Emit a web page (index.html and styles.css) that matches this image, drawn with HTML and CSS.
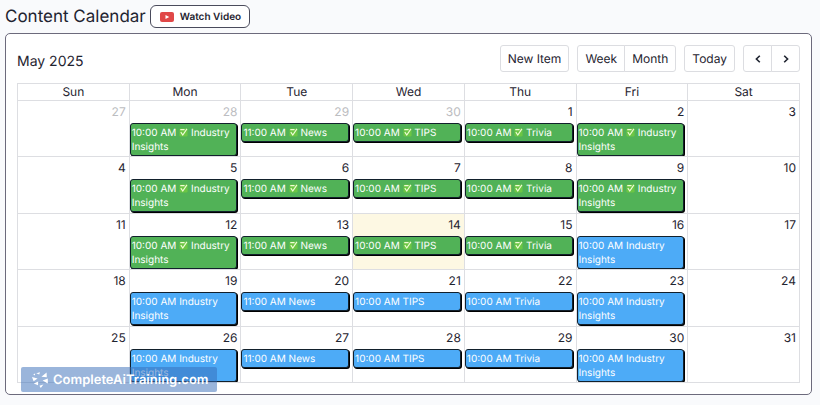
FILE: index.html
```
<!DOCTYPE html>
<html lang="en">
  <head>
    <meta charset="utf-8" />
    <meta name="viewport" content="width=device-width, initial-scale=1" />
    <title>Content Calendar</title>
    <link rel="stylesheet" href="styles.css">
  </head>
  <body>
    <svg width="0" height="0" class="sprite" aria-hidden="true">
      <symbol id="check" viewBox="0 0 10 10">
        <rect x="0.5" y="0.5" width="9" height="9" rx="1.5" fill="#6cc644" />
        <path d="M1.4 1.8H6.2M2 4.6 4.2 7.8 8.8 1" fill="none" stroke="#effcd6" stroke-width="1.3" />
      </symbol>
    </svg>

    <header class="page-header">
      <h1>Content Calendar</h1>
      <button type="button" class="watch-btn">
        <svg width="14" height="10" viewBox="0 0 14 10" aria-hidden="true">
          <rect width="14" height="10" rx="2" fill="#e04848" />
          <path d="M5.5 3v4L9.2 5z" fill="#fff" />
        </svg>
        Watch Video
      </button>
    </header>

    <main class="calendar">
      <div class="toolbar">
        <h2>May 2025</h2>
        <div class="toolbar-actions">
          <button type="button" class="btn">New Item</button>
          <div class="btn-group">
            <button type="button" class="btn">Week</button>
            <button type="button" class="btn">Month</button>
          </div>
          <button type="button" class="btn">Today</button>
          <div class="btn-group">
            <button type="button" class="btn btn-icon" aria-label="Previous month">
              <svg width="6" height="8" viewBox="0 0 6 8"><path d="M4.8 0.7 1.4 4l3.4 3.3" /></svg>
            </button>
            <button type="button" class="btn btn-icon" aria-label="Next month">
              <svg width="6" height="8" viewBox="0 0 6 8"><path d="M1.2 0.7 4.6 4 1.2 7.3" /></svg>
            </button>
          </div>
        </div>
      </div>

      <table class="month">
        <thead>
          <tr><th>Sun</th><th>Mon</th><th>Tue</th><th>Wed</th><th>Thu</th><th>Fri</th><th>Sat</th></tr>
        </thead>
        <tbody>
          <tr>
            <td class="other"><span class="day">27</span></td>
            <td class="other"><span class="day">28</span><div class="event done">10:00 AM <svg class="check"><use href="#check" /></svg> Industry Insights</div></td>
            <td class="other"><span class="day">29</span><div class="event done">11:00 AM <svg class="check"><use href="#check" /></svg> News</div></td>
            <td class="other"><span class="day">30</span><div class="event done">10:00 AM <svg class="check"><use href="#check" /></svg> TIPS</div></td>
            <td><span class="day">1</span><div class="event done">10:00 AM <svg class="check"><use href="#check" /></svg> Trivia</div></td>
            <td><span class="day">2</span><div class="event done">10:00 AM <svg class="check"><use href="#check" /></svg> Industry Insights</div></td>
            <td><span class="day">3</span></td>
          </tr>
          <tr>
            <td><span class="day">4</span></td>
            <td><span class="day">5</span><div class="event done">10:00 AM <svg class="check"><use href="#check" /></svg> Industry Insights</div></td>
            <td><span class="day">6</span><div class="event done">11:00 AM <svg class="check"><use href="#check" /></svg> News</div></td>
            <td><span class="day">7</span><div class="event done">10:00 AM <svg class="check"><use href="#check" /></svg> TIPS</div></td>
            <td><span class="day">8</span><div class="event done">10:00 AM <svg class="check"><use href="#check" /></svg> Trivia</div></td>
            <td><span class="day">9</span><div class="event done">10:00 AM <svg class="check"><use href="#check" /></svg> Industry Insights</div></td>
            <td><span class="day">10</span></td>
          </tr>
          <tr>
            <td><span class="day">11</span></td>
            <td><span class="day">12</span><div class="event done">10:00 AM <svg class="check"><use href="#check" /></svg> Industry Insights</div></td>
            <td><span class="day">13</span><div class="event done">11:00 AM <svg class="check"><use href="#check" /></svg> News</div></td>
            <td class="today"><span class="day">14</span><div class="event done">10:00 AM <svg class="check"><use href="#check" /></svg> TIPS</div></td>
            <td><span class="day">15</span><div class="event done">10:00 AM <svg class="check"><use href="#check" /></svg> Trivia</div></td>
            <td><span class="day">16</span><div class="event">10:00 AM Industry Insights</div></td>
            <td><span class="day">17</span></td>
          </tr>
          <tr>
            <td><span class="day">18</span></td>
            <td><span class="day">19</span><div class="event">10:00 AM Industry Insights</div></td>
            <td><span class="day">20</span><div class="event">11:00 AM News</div></td>
            <td><span class="day">21</span><div class="event">10:00 AM TIPS</div></td>
            <td><span class="day">22</span><div class="event">10:00 AM Trivia</div></td>
            <td><span class="day">23</span><div class="event">10:00 AM Industry Insights</div></td>
            <td><span class="day">24</span></td>
          </tr>
          <tr>
            <td><span class="day">25</span></td>
            <td><span class="day">26</span><div class="event">10:00 AM Industry Insights</div></td>
            <td><span class="day">27</span><div class="event">11:00 AM News</div></td>
            <td><span class="day">28</span><div class="event">10:00 AM TIPS</div></td>
            <td><span class="day">29</span><div class="event">10:00 AM Trivia</div></td>
            <td><span class="day">30</span><div class="event">10:00 AM Industry Insights</div></td>
            <td><span class="day">31</span></td>
          </tr>
        </tbody>
      </table>

      <div class="watermark">
        <svg width="16" height="16" viewBox="0 0 16 16" fill="#fff" aria-hidden="true">
          <path d="M0 5 5.6 6.4 1.6 9.2zM4.2 1.2 8 0.2 7.2 2.6zM9.4 4.8 14.6 0.6 14.8 5.2zM15.8 6.6v5L10.6 8.4zM1.8 11.6 6.2 9.4 6 13.2zM7.4 13.8l4-1.4-2.6 3.6zM1.2 2.2l2-0.6-0.4 2z" />
        </svg>
        CompleteAiTraining.com
      </div>
    </main>
  </body>
</html>
```
FILE: styles.css
```
* {
  box-sizing: border-box;
}

body {
  margin: 0;
  padding: 5px 8px 10px 5px;
  background: #f9fafc;
  color: #1f2430;
  font-family: Inter, "Liberation Sans", sans-serif;
  text-rendering: geometricPrecision;
}

.sprite {
  position: absolute;
}

button {
  font-family: inherit;
  color: inherit;
  background: #fff;
  text-rendering: inherit;
  cursor: pointer;
}

.page-header {
  display: flex;
  align-items: center;
  gap: 4px;
  margin-bottom: 5px;
}

h1,
h2 {
  margin: 0;
  font-weight: 400;
}

h1 {
  font-size: 17px;
  line-height: 22px;
}

.watch-btn {
  display: flex;
  align-items: center;
  gap: 6px;
  height: 23px;
  padding: 0 8px 0 9px;
  border: 1px solid #4a4b5c;
  border-radius: 6px;
  font-size: 10px;
  font-weight: 600;
}

.calendar {
  position: relative;
  padding: 11px;
  background: #fff;
  border: 1px solid #6c6a7c;
  border-radius: 5px;
}

.toolbar {
  display: flex;
  align-items: center;
  justify-content: space-between;
  margin-bottom: 11px;
}

h2 {
  padding-top: 5px;
  font-size: 14px;
}

.toolbar-actions {
  display: flex;
  gap: 8px;
}

.btn {
  height: 27px;
  padding: 0 7px;
  border: 1px solid #dcdde1;
  border-radius: 3px;
  font-size: 12px;
}

.btn-group {
  display: flex;
}

.btn-group .btn:first-child {
  border-radius: 3px 0 0 3px;
}

.btn-group .btn:last-child {
  margin-left: -1px;
  border-radius: 0 3px 3px 0;
}

.btn-icon {
  width: 29px;
}

.btn-icon path {
  fill: none;
  stroke: #1f2430;
  stroke-width: 1.6;
}

.month {
  width: 100%;
  height: 300px;
  table-layout: fixed;
  border-collapse: collapse;
}

.month th,
.month td {
  padding: 0;
  border: 1px solid #dddee2;
}

.month th {
  height: 17px;
  font-size: 12px;
  font-weight: 400;
  line-height: 16px;
}

.month td {
  vertical-align: top;
}

.day {
  display: block;
  padding: 3px 3px 0 0;
  font-size: 12px;
  line-height: 16px;
  text-align: right;
}

.other .day {
  color: #bcbdc1;
}

.today {
  background: #fdf8e3;
}

.event {
  margin: 3px 3px 0 0;
  padding: 2px 1px 1px;
  border: 1px solid #12202c;
  border-radius: 3px;
  box-shadow: 1px 1px 0 #000;
  background: #4dabf7;
  color: #fff;
  font-size: 10px;
  line-height: 14px;
}

.done {
  background: #51b257;
}

.check {
  width: 9px;
  height: 9px;
  vertical-align: -1px;
}

/* site badge over the bottom left corner */
.watermark {
  position: absolute;
  left: 15px;
  bottom: 2px;
  display: flex;
  align-items: center;
  gap: 5px;
  height: 25px;
  padding: 0 8px 0 11px;
  border-radius: 2px;
  background: rgba(54, 108, 184, 0.5);
  color: #fff;
  font-size: 13px;
  font-weight: 600;
}
```
